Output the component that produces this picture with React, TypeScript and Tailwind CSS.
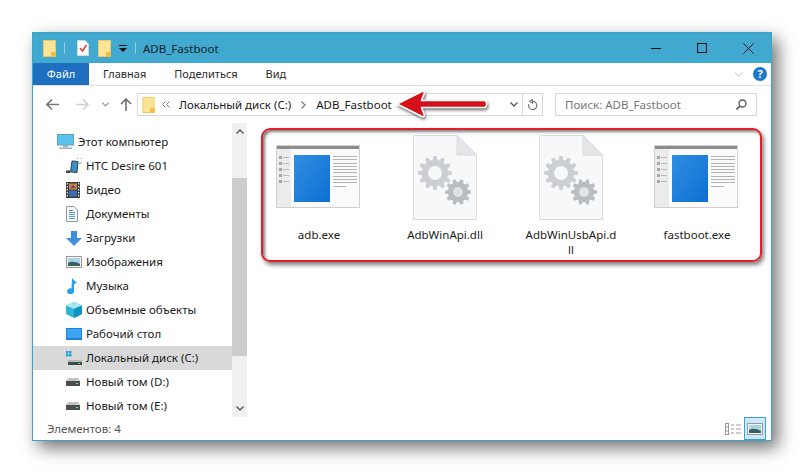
import type { ReactNode } from "react"

const uiFont = "font-['Noto_Sans','Open_Sans',sans-serif]"

function Folder({ className = "w-[13px] h-[17px]" }: { className?: string }) {
  return (
    <svg viewBox="0 0 13 17" className={className}>
      <rect x="0.5" y="0.5" width="12" height="16" fill="#fce596" stroke="#ecc968" />
      <rect x="8" y="12" width="5" height="5" fill="#f2bd44" />
    </svg>
  )
}

function gearPath(cx: number, cy: number, r: number, teeth: number) {
  const pts: string[] = []
  const step = (Math.PI * 2) / teeth
  for (let i = 0; i < teeth; i++) {
    const a = i * step
    const offsets: [number, number][] = [
      [-0.3, r * 0.78],
      [-0.17, r],
      [0.17, r],
      [0.3, r * 0.78],
    ]
    offsets.forEach(([d, rad]) => {
      const t = a + d * step * 1.1
      pts.push(`${(cx + Math.cos(t) * rad).toFixed(2)},${(cy + Math.sin(t) * rad).toFixed(2)}`)
    })
  }
  return `M${pts.join("L")}Z`
}

function DllIcon() {
  return (
    <svg viewBox="0 0 64 85" className="w-[64px] h-[85px]">
      <path d="M0.5 0.5H44L63.5 20V84.5H0.5Z" fill="#f7f8f9" stroke="#d9dcdf" />
      <path d="M44 0.5V20H63.5Z" fill="#e3e5e8" stroke="#d9dcdf" />
      <path d={gearPath(22, 38, 17, 12)} fill="#cbcfd3" />
      <circle cx="22" cy="38" r="7" fill="#f7f8f9" />
      <path d={gearPath(45, 57, 13, 10)} fill="#b8bdc2" />
      <circle cx="45" cy="57" r="5" fill="#dfe2e5" />
    </svg>
  )
}

function ExeIcon() {
  return (
    <div className="w-[84px] h-[63px] mr-[2px] mb-[2px] bg-[#fbfbfb] border border-[#d0d0d0] flex flex-col">
      <div className="h-[3px] bg-[#8c8c8c]" />
      <div className="flex flex-1">
        <div className="w-[14px] bg-[#ececec] flex flex-col gap-[3px] pt-[7px] pl-[2px]">
          {[0, 1, 2, 3, 4].map((i) => (
            <div key={i} className="flex items-center gap-[1px]">
              <div className="w-[3px] h-[3px] bg-[#a8a8a8]" />
              <div className="w-[6px] h-[1px] bg-[#b8b8b8]" />
            </div>
          ))}
        </div>
        <div className="w-[36px] h-[47px] mt-[6px] ml-[3px] bg-gradient-to-br from-[#2f8fe2] to-[#0a6fd2]" />
        <div className="flex flex-col gap-[2.3px] ml-[3px] mt-[7px] w-[24px]">
          {[0, 1, 2, 3, 4, 5, 6, 7, 8].map((i) => (
            <div key={i} className="h-[1px] bg-[#b4b4b4]" />
          ))}
          <div className="h-[1px] w-[13px] bg-[#b4b4b4]" />
        </div>
      </div>
    </div>
  )
}

function FileItem({ label, icon }: { label: string; icon: ReactNode }) {
  return (
    <div className="flex flex-col items-center w-[126px]">
      <div className="h-[87px] flex items-center justify-center">{icon}</div>
      <div className="w-[93px] mt-[6px] text-center text-[11.5px] leading-[15px] text-[#1a1a1a] break-all">{label}</div>
    </div>
  )
}

const icons: Record<string, ReactNode> = {
  pc: (
    <svg viewBox="0 0 17 16" className="w-[17px] h-[16px]">
      <rect x="0.5" y="0.5" width="16" height="10.5" fill="#5cc3f0" stroke="#5e9fb8" />
      <rect x="6" y="11" width="5" height="2.5" fill="#9ab6c2" />
      <rect x="2" y="13.5" width="13" height="1.5" fill="#9fb5bf" />
    </svg>
  ),
  phone: (
    <svg viewBox="0 0 16 16" className="w-[16px] h-[16px]">
      <path d="M6 3L12 3.5L11 14.5L4.5 14Z" fill="#3c8ec4" stroke="#33414d" />
      <rect x="0" y="12.5" width="4" height="2.5" fill="#444" />
      <path d="M12 5 A3 3 0 1 0 11 1" fill="none" stroke="#9a9a9a" />
    </svg>
  ),
  video: (
    <svg viewBox="0 0 14 16" className="w-[14px] h-[16px]">
      <rect width="14" height="16" fill="#3a3a40" />
      <rect x="3" y="1.5" width="8" height="6" fill="#c98a3a" />
      <rect x="3" y="8.5" width="8" height="6" fill="#3d6fb8" />
      <path d="M4 6 L7 3 L10 6Z" fill="#7a3f8c" />
      {[1, 4, 7, 10, 13].map((y) => (
        <g key={y}>
          <rect x="0.8" y={y} width="1.2" height="1.5" fill="#eee" />
          <rect x="12" y={y} width="1.2" height="1.5" fill="#eee" />
        </g>
      ))}
    </svg>
  ),
  docs: (
    <svg viewBox="0 0 12 16" className="w-[12px] h-[16px]">
      <path d="M0.5 0.5H8L11.5 4V15.5H0.5Z" fill="#fdfdfd" stroke="#8d9aa3" />
      <path d="M3 4.5H7M3 6.5H9M3 8.5H9M3 10.5H9M3 12.5H9" stroke="#4f9bd0" />
    </svg>
  ),
  down: (
    <svg viewBox="0 0 16 15" className="w-[16px] h-[15px]">
      <path d="M5 0H11V7H16L8 15L0 7H5Z" fill="#3f8fdc" />
    </svg>
  ),
  images: (
    <svg viewBox="0 0 16 12" className="w-[16px] h-[12px]">
      <rect x="0.5" y="0.5" width="15" height="11" fill="#f5f5f5" stroke="#9a9a9a" />
      <rect x="2" y="2" width="12" height="8" fill="#a9d3e6" />
      <path d="M2 7 Q7 4 14 8 V10 H2Z" fill="#38605e" />
    </svg>
  ),
  music: (
    <svg viewBox="0 0 12 16" className="w-[12px] h-[16px]">
      <path d="M6 0 L11 5 L8 6 L8 13 A3.5 3 0 1 1 5.5 10.5Z" fill="#2b9fe6" />
    </svg>
  ),
  cube: (
    <svg viewBox="0 0 16 16" className="w-[16px] h-[16px]">
      <path d="M8 0L16 3.5V12L8 16L0 12V3.5Z" fill="#2bb7d4" />
      <path d="M8 0L16 3.5L8 7L0 3.5Z" fill="#a5e6ef" />
      <path d="M8 7L16 3.5V12L8 16Z" fill="#0f93c2" />
    </svg>
  ),
  desktop: (
    <svg viewBox="0 0 16 12" className="w-[16px] h-[12px]">
      <rect width="16" height="12" fill="#1f7fdc" />
      <rect x="1" y="1" width="14" height="9" fill="#3ca5f2" />
    </svg>
  ),
  sys: (
    <svg viewBox="0 0 16 14" className="w-[16px] h-[14px]">
      <g fill="#1fa5e0">
        <rect x="0" y="0" width="2.5" height="2.5" />
        <rect x="3" y="0" width="2.5" height="2.5" />
        <rect x="0" y="3" width="2.5" height="2.5" />
        <rect x="3" y="3" width="2.5" height="2.5" />
      </g>
      <rect x="2" y="9" width="14" height="2" fill="#b8b8b8" />
      <rect x="2" y="11" width="14" height="3" fill="#3f4a45" />
      <rect x="12" y="12" width="2" height="1" fill="#6fd06f" />
    </svg>
  ),
  disk: (
    <svg viewBox="0 0 14 8" className="w-[14px] h-[8px]">
      <path d="M2 0H12L14 3H0Z" fill="#c4c4c4" />
      <rect y="3" width="14" height="5" fill="#4a4f50" />
      <rect x="10" y="5" width="2" height="1" fill="#8fd88f" />
    </svg>
  ),
}

const navItems = [
  { label: "HTC Desire 601", icon: "phone" },
  { label: "Видео", icon: "video" },
  { label: "Документы", icon: "docs" },
  { label: "Загрузки", icon: "down" },
  { label: "Изображения", icon: "images" },
  { label: "Музыка", icon: "music" },
  { label: "Объемные объекты", icon: "cube" },
  { label: "Рабочий стол", icon: "desktop" },
  { label: "Локальный диск (C:)", icon: "sys", active: true },
  { label: "Новый том (D:)", icon: "disk" },
  { label: "Новый том (E:)", icon: "disk" },
]

function Sidebar() {
  return (
    <div className="w-[214px] flex shrink-0">
      <div className="w-[199px] pt-[7px] text-[11.5px] text-[#1a1a1a]">
        <div className="h-[24px] flex items-center pl-[24px] gap-[4px]">
          {icons.pc}
          <span>Этот компьютер</span>
        </div>
        {navItems.map((item) => (
          <div key={item.label} className={`h-[24px] flex items-center pl-[33px] ${item.active ? "bg-[#d9d9d9]" : ""}`}>
            <div className="w-[20px] shrink-0 flex justify-start">{icons[item.icon]}</div>
            <span>{item.label}</span>
          </div>
        ))}
      </div>
      <div className="w-[15px] bg-[#f0f0f0] flex flex-col">
        <div className="h-[17px] flex items-center justify-center">
          <svg viewBox="0 0 8 5" className="w-[8px] h-[5px]"><path d="M0.5 4.5L4 1L7.5 4.5" fill="none" stroke="#555" strokeWidth="1.4" /></svg>
        </div>
        <div className="h-[178px] mt-[38px] bg-[#cdcdcd]" />
        <div className="flex-1" />
        <div className="h-[17px] flex items-center justify-center">
          <svg viewBox="0 0 8 5" className="w-[8px] h-[5px]"><path d="M0.5 0.5L4 4L7.5 0.5" fill="none" stroke="#555" strokeWidth="1.4" /></svg>
        </div>
      </div>
    </div>
  )
}

export default function App() {
  return (
    <div className={`w-[804px] h-[474px] bg-white pt-[32px] pl-[32px] ${uiFont}`}>
      <div className="relative w-[740px] h-[409px] border border-[#3fa3c6] bg-white flex flex-col shadow-[6px_7px_16px_rgba(0,0,0,0.55)]">
        {/* title bar */}
        <div className="h-[30px] bg-[#41a9cf] flex items-center shrink-0 pl-[10px]">
          <Folder />
          <div className="w-px h-[12px] bg-[#8fc8dd] ml-[8px] mr-[12px]" />
          <svg viewBox="0 0 12 16" className="w-[12px] h-[16px]">
            <path d="M0.5 0.5H8L11.5 4V15.5H0.5Z" fill="#fff" stroke="#cfd8dc" />
            <path d="M3 8L5.5 11L9.5 5" fill="none" stroke="#d9402f" strokeWidth="1.5" />
          </svg>
          <Folder className="w-[13px] h-[17px] ml-[9px]" />
          <svg viewBox="0 0 8 7" className="w-[8px] h-[7px] ml-[8px]">
            <path d="M0 0H8V1H0ZM0 3H8L4 7Z" fill="#111" />
          </svg>
          <div className="w-px h-[12px] bg-[#8fc8dd] ml-[8px] mr-[7px]" />
          <span className="text-[11.5px] mt-[2px] text-[#10222b]">ADB_Fastboot</span>
          <div className="ml-auto flex items-center pr-[17px] gap-[35px]">
            <div className="w-[10px] h-px bg-[#111] mr-[1px]" />
            <div className="w-[10px] h-[10px] border border-[#111] mr-[1px]" />
            <svg viewBox="0 0 11 11" className="w-[11px] h-[11px]">
              <path d="M0.5 0.5L10.5 10.5M10.5 0.5L0.5 10.5" stroke="#111" />
            </svg>
          </div>
        </div>

        {/* ribbon tabs */}
        <div className="h-[23px] flex items-center shrink-0 border-b border-[#e2e2e2] text-[11px] text-[#2b2b2b]">
          <div className="w-[56px] h-full bg-[#1f6fc0] text-white flex items-center justify-center">Файл</div>
          <span className="ml-[14px]">Главная</span>
          <span className="ml-[28px]">Поделиться</span>
          <span className="ml-[28px]">Вид</span>
          <svg viewBox="0 0 10 6" className="w-[9px] h-[5px] ml-auto mr-[10px]">
            <path d="M0.5 0.5L5 5L9.5 0.5" fill="none" stroke="#aaa" />
          </svg>
          <div className="w-[14px] h-[14px] rounded-full bg-[#1c78cc] text-white text-[11px] font-bold flex items-center justify-center mr-[4px]">?</div>
        </div>

        {/* address row */}
        <div className="h-[37px] flex items-center shrink-0 text-[11.5px]">
          <svg viewBox="0 0 13 11" className="w-[13px] h-[11px] ml-[13px]">
            <path d="M6 0.5L1 5.5L6 10.5M1 5.5H13" fill="none" stroke="#7a7a7a" strokeWidth="1.6" />
          </svg>
          <svg viewBox="0 0 13 11" className="w-[13px] h-[11px] ml-[17px]">
            <path d="M7 0.5L12 5.5L7 10.5M12 5.5H0" fill="none" stroke="#d2d2d2" strokeWidth="1.6" />
          </svg>
          <svg viewBox="0 0 8 5" className="w-[7px] h-[5px] ml-[13px]">
            <path d="M0.5 0.5L4 4L7.5 0.5" fill="none" stroke="#999" strokeWidth="1.4" />
          </svg>
          <svg viewBox="0 0 11 13" className="w-[12px] h-[13px] ml-[11px]">
            <path d="M0.5 6L5.5 1L10.5 6M5.5 1V13" fill="none" stroke="#707070" strokeWidth="1.6" />
          </svg>
          <div className="w-[406px] h-[23px] ml-[5px] border border-[#d9d9d9] flex items-center text-[#1a1a1a]">
            <Folder className="w-[13px] h-[16px] ml-[4px]" />
            <svg viewBox="0 0 8 7" className="w-[8px] h-[7px] ml-[7px] shrink-0">
              <path d="M3.5 0.5L0.5 3.5L3.5 6.5M7.5 0.5L4.5 3.5L7.5 6.5" fill="none" stroke="#777" />
            </svg>
            <span className="ml-[9px]">Локальный диск (C:)</span>
            <svg viewBox="0 0 5 8" className="w-[5px] h-[8px] mx-[10px] shrink-0">
              <path d="M0.5 0.5L4 4L0.5 7.5" fill="none" stroke="#777" strokeWidth="1.2" />
            </svg>
            <span>ADB_Fastboot</span>
            <svg viewBox="0 0 8 5" className="w-[8px] h-[5px] ml-auto mr-[4px]">
              <path d="M0.5 0.5L4 4L7.5 0.5" fill="none" stroke="#555" strokeWidth="1.4" />
            </svg>
            <div className="w-px h-full bg-[#d9d9d9]" />
            <svg viewBox="0 0 12 12" className="w-[11px] h-[12px] mx-[4px]">
              <path d="M6 2A4.5 4.5 0 1 1 2 5M6 0V4L3 2Z" fill="none" stroke="#777" strokeWidth="1.3" />
            </svg>
          </div>
          <div className="w-[202px] h-[23px] ml-[12px] border border-[#d9d9d9] flex items-center pl-[9px] pr-[8px] text-[#777]">
            <span>Поиск: ADB_Fastboot</span>
            <svg viewBox="0 0 11 11" className="w-[11px] h-[11px] ml-auto mr-[1px]">
              <circle cx="6.5" cy="4.5" r="3.5" fill="none" stroke="#555" strokeWidth="1.3" />
              <path d="M4 7L0.5 10.5" stroke="#555" strokeWidth="1.6" />
            </svg>
          </div>
        </div>

        {/* body */}
        <div className="flex flex-1 min-h-0">
          <Sidebar />
          <div className="flex-1 pl-[9px] pt-[11px] flex items-start">
            <FileItem label="adb.exe" icon={<ExeIcon />} />
            <FileItem label="AdbWinApi.dll" icon={<DllIcon />} />
            <FileItem label="AdbWinUsbApi.dll" icon={<DllIcon />} />
            <FileItem label="fastboot.exe" icon={<ExeIcon />} />
          </div>
        </div>

        {/* status bar */}
        <div className="h-[23px] flex items-center shrink-0 text-[11.5px] text-[#555] pl-[14px]">
          <span>Элементов: 4</span>
          <div className="ml-auto flex items-center pr-[5px]">
            <svg viewBox="0 0 16 12" className="w-[16px] h-[12px] mr-[3px]">
              <rect x="0.5" y="0.5" width="3" height="11" fill="none" stroke="#999" />
              <path d="M0.5 4H3.5M0.5 8H3.5M6 2H9M11 2H16M6 6H9M11 6H16M6 10H9M11 10H16" stroke="#999" />
            </svg>
            <div className="w-[22px] h-[23px] bg-[#cce8ff] border border-[#3fa3c6] flex items-center justify-center">
              {icons.images}
            </div>
          </div>
        </div>

        {/* red annotation frame over the file area */}
        <div className="absolute left-[228px] top-[95px] w-[501px] h-[134px] rounded-[9px] border-2 border-[#e0202c] shadow-[2px_3px_4px_rgba(0,0,0,0.5),inset_2px_2px_3px_rgba(0,0,0,0.5)]" />

        {/* arrow pointing at the address */}
        <svg viewBox="0 0 96 30" className="absolute left-[362px] top-[56px] w-[96px] h-[30px] drop-shadow-[1px_2px_1.5px_rgba(0,0,0,0.55)]">
          <path d="M2 15L27 2.5Q30 1.5 29 5L26.5 11.5H90Q93.5 15 90 18.5H26.5L29 25Q30 28.5 27 27.5Z" fill="#d3101c" stroke="#fff" strokeWidth="1.6" strokeLinejoin="round" />
        </svg>
      </div>
    </div>
  )
}
